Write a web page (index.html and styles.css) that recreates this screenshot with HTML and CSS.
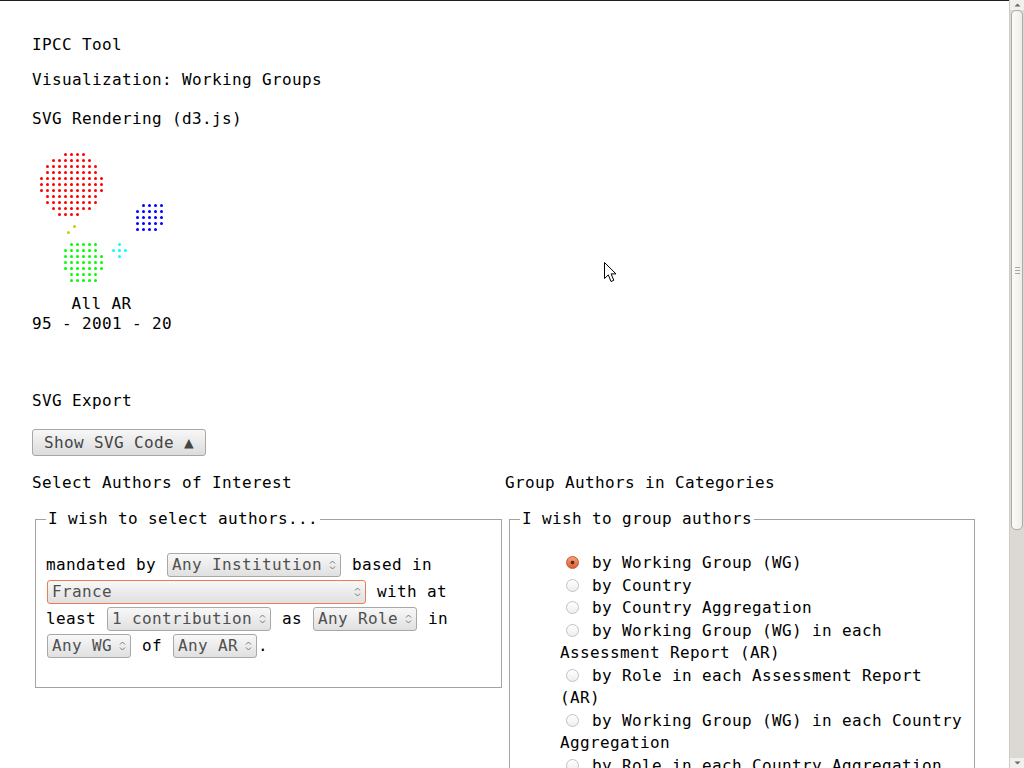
FILE: index.html
```html
<!DOCTYPE html>
<html lang="en">
<head>
<meta charset="utf-8">
<title>IPCC Tool</title>
<link rel="stylesheet" href="styles.css">
</head>
<body>
<div class="page">
  <div class="title">IPCC Tool</div>
  <div class="subtitle">Visualization: Working Groups</div>
  <div class="section">SVG Rendering (d3.js)</div>
  <svg class="viz" width="200" height="212" viewBox="0 0 200 212">
    <defs>
      <pattern id="pr" width="6" height="6" patternUnits="userSpaceOnUse" x="6" y="23"><circle cx="3.5" cy="3.5" r="1.5" fill="#ff0000"/></pattern>
      <pattern id="pg" width="6" height="6" patternUnits="userSpaceOnUse" x="6" y="23"><circle cx="3.5" cy="3.5" r="1.5" fill="#00ff00"/></pattern>
      <pattern id="pb" width="6" height="6" patternUnits="userSpaceOnUse" x="0" y="74"><circle cx="3.5" cy="3.5" r="1.5" fill="#0000ff"/></pattern>
    </defs>
    <g fill="url(#pr)">
      <rect x="30" y="23" width="24" height="6"/>
      <rect x="18" y="29" width="42" height="6"/>
      <rect x="12" y="35" width="54" height="12"/>
      <rect x="6" y="47" width="66" height="18"/>
      <rect x="12" y="65" width="54" height="12"/>
      <rect x="18" y="77" width="42" height="6"/>
      <rect x="24" y="83" width="24" height="6"/>
    </g>
    <g fill="url(#pg)">
      <rect x="36" y="113" width="30" height="6"/>
      <rect x="30" y="119" width="36" height="6"/>
      <rect x="30" y="125" width="42" height="18"/>
      <rect x="36" y="143" width="30" height="12"/>
    </g>
    <g fill="url(#pb)">
      <rect x="108" y="74" width="24" height="6"/>
      <rect x="102" y="80" width="30" height="18"/>
      <rect x="102" y="98" width="24" height="6"/>
    </g>
    <g fill="#cccc00">
      <circle cx="42.5" cy="98.5" r="1.5"/>
      <circle cx="36.5" cy="104.5" r="1.5"/>
    </g>
    <g fill="#00ffff">
      <circle cx="87.5" cy="116.5" r="1.5"/>
      <circle cx="81.5" cy="122.5" r="1.5"/>
      <circle cx="87.5" cy="122.5" r="1.5"/>
      <circle cx="93.5" cy="122.5" r="1.5"/>
      <circle cx="87.5" cy="128.5" r="1.5"/>
    </g>
    <text class="vt" x="39.5" y="181">All AR</text>
    <text class="vt" x="0" y="201">95 - 2001 - 20</text>
  </svg>
  <div class="section export">SVG Export</div>
  <button class="btn" type="button">Show SVG Code ▲</button>
  <div class="cols">
    <div class="col col-left">
      <div class="colhead">Select Authors of Interest</div>
      <fieldset class="box box-left">
        <legend>I wish to select authors...</legend>
        <p class="sentence">mandated by <span class="sel"><select><option>Any Institution</option></select><svg class="arr" width="7" height="12" viewBox="0 0 7 12"><path d="M1 4.5 L3.5 2 L6 4.5 M1 7.5 L3.5 10 L6 7.5" fill="none" stroke="#777" stroke-width="1"/></svg></span> based in <span class="sel"><select class="wide focus"><option>France</option></select><svg class="arr" width="7" height="12" viewBox="0 0 7 12"><path d="M1 4.5 L3.5 2 L6 4.5 M1 7.5 L3.5 10 L6 7.5" fill="none" stroke="#777" stroke-width="1"/></svg></span> with at least <span class="sel"><select><option>1 contribution</option></select><svg class="arr" width="7" height="12" viewBox="0 0 7 12"><path d="M1 4.5 L3.5 2 L6 4.5 M1 7.5 L3.5 10 L6 7.5" fill="none" stroke="#777" stroke-width="1"/></svg></span> as <span class="sel"><select><option>Any Role</option></select><svg class="arr" width="7" height="12" viewBox="0 0 7 12"><path d="M1 4.5 L3.5 2 L6 4.5 M1 7.5 L3.5 10 L6 7.5" fill="none" stroke="#777" stroke-width="1"/></svg></span> in <span class="sel"><select><option>Any WG</option></select><svg class="arr" width="7" height="12" viewBox="0 0 7 12"><path d="M1 4.5 L3.5 2 L6 4.5 M1 7.5 L3.5 10 L6 7.5" fill="none" stroke="#777" stroke-width="1"/></svg></span> of <span class="sel"><select><option>Any AR</option></select><svg class="arr" width="7" height="12" viewBox="0 0 7 12"><path d="M1 4.5 L3.5 2 L6 4.5 M1 7.5 L3.5 10 L6 7.5" fill="none" stroke="#777" stroke-width="1"/></svg></span>.</p>
      </fieldset>
    </div>
    <div class="col col-right">
      <div class="colhead colhead-right">Group Authors in Categories</div>
      <fieldset class="box box-right">
        <legend>I wish to group authors</legend>
        <ul class="opts">
          <li><label><input type="radio" name="grp" checked> by Working Group (WG)</label></li>
          <li><label><input type="radio" name="grp"> by Country</label></li>
          <li><label><input type="radio" name="grp"> by Country Aggregation</label></li>
          <li><label><input type="radio" name="grp"> by Working Group (WG) in each Assessment Report (AR)</label></li>
          <li><label><input type="radio" name="grp"> by Role in each Assessment Report (AR)</label></li>
          <li><label><input type="radio" name="grp"> by Working Group (WG) in each Country Aggregation</label></li>
          <li><label><input type="radio" name="grp"> by Role in each Country Aggregation</label></li>
        </ul>
      </fieldset>
    </div>
  </div>
</div>
<svg class="cursor" width="14" height="22" viewBox="0 0 14 22"><path d="M0.5 0.5 L0.5 16.5 L4.3 12.9 L7 19.5 L9.8 18.3 L7.1 11.9 L12 11.9 Z" fill="#fff" stroke="#000" stroke-width="1" stroke-linejoin="round"/></svg>
<div class="scrollbar" aria-hidden="true">
  <div class="sb-btn sb-up"><svg width="7" height="4" viewBox="0 0 7 4"><path d="M0.5 3.5 L3.5 0.5 L6.5 3.5 Z" fill="#6b6964"/></svg></div>
  <div class="sb-thumb"><span class="grip"></span><span class="grip"></span><span class="grip"></span></div>
  <div class="sb-track"></div>
  <div class="sb-btn sb-down"><svg width="7" height="4" viewBox="0 0 7 4"><path d="M0.5 0.5 L3.5 3.5 L6.5 0.5 Z" fill="#6b6964"/></svg></div>
</div>
</body>
</html>
```
FILE: styles.css
```css
html {
  border-top: 1px solid #1e1e1e;
  background: #fff;
  scrollbar-width: none;
}
body {
  margin: 0;
  font-family: "DejaVu Sans Mono", monospace;
  font-size: 16px;
  line-height: 20px;
  letter-spacing: 0.37px;
  color: #000;
}
.page {
  padding: 34px 32px 0;
  min-height: 1104px;
  box-sizing: border-box;
}
.subtitle { margin-top: 15px; }
.section { margin-top: 19px; }
.viz {
  display: block;
  margin-top: -1px;
  overflow: visible;
}
.vt {
  font-family: "DejaVu Sans Mono", monospace;
  font-size: 16px;
  letter-spacing: 0.37px;
  fill: #000;
}
.export { margin-top: 51px; }
.btn {
  display: block;
  margin-top: 18px;
  height: 27px;
  padding: 3px 11px;
  font: inherit;
  line-height: 19px;
  letter-spacing: inherit;
  color: #444;
  background: linear-gradient(#f7f7f7, #dcdcdc);
  border: 1px solid #a7a7a7;
  border-radius: 3px;
}
.cols {
  display: grid;
  grid-template-columns: 472px 473px;
  margin-top: 17px;
}
.colhead-right { padding-left: 1px; }
.box {
  border: 1px solid #a3a3a3;
  padding: 0 10px 10px;
  margin: 16px 2px 0;
  min-width: 0;
}
.box-left { margin-left: 3px; }
.box-right { margin-left: 5px; }
.box legend {
  padding: 0 2px;
  line-height: 20px;
}
.sentence {
  margin: 22px 0 18px;
  line-height: 27px;
}
.sel {
  position: relative;
  display: inline-block;
  vertical-align: top;
  margin: 1.5px 1px 0;
  line-height: 0;
}
.sel select {
  display: block;
  -webkit-appearance: none;
  appearance: none;
  height: 24px;
  margin: 0;
  padding: 0 17px 0 4px;
  font: inherit;
  font-size: 16px;
  line-height: 22px;
  letter-spacing: 0.37px;
  color: #505050;
  background: linear-gradient(#f8f8f8, #e0e0e0);
  border: 1px solid #a8a8a8;
  border-radius: 3px;
}
.sel select.wide { width: 319px; }
.sel select.focus { border-color: #ec7c54; }
.arr {
  position: absolute;
  right: 5px;
  top: 6px;
  pointer-events: none;
}
.opts {
  list-style: none;
  margin: 23px 0 0;
  padding: 0 0 0 40px;
  line-height: 22.5px;
}
.opts input[type=radio] {
  -webkit-appearance: none;
  appearance: none;
  box-sizing: border-box;
  width: 13px;
  height: 13px;
  margin: 4px 3px 0 6px;
  vertical-align: top;
  border: 1px solid #c2c2c2;
  border-radius: 50%;
  background: linear-gradient(#ffffff, #eeeeee);
}
.opts input[type=radio]:checked {
  border-color: #c9552c;
  background: radial-gradient(circle, #5a2a18 0, #5a2a18 1.4px, transparent 2.2px), linear-gradient(#f4a07a, #dc5e33);
}
.cursor {
  position: absolute;
  left: 604px;
  top: 262px;
  pointer-events: none;
}
.scrollbar {
  position: fixed;
  top: 0;
  right: 0;
  width: 15px;
  height: 100%;
  display: flex;
  flex-direction: column;
  background: #dcd9d5;
  border-left: 1px solid #cfccc7;
  box-sizing: border-box;
}
.sb-btn {
  height: 10px;
  flex: none;
  display: flex;
  align-items: center;
  justify-content: center;
  background: #f1f0ee;
}
.sb-thumb {
  height: 520px;
  flex: none;
  margin: 0 1px;
  display: flex;
  flex-direction: column;
  align-items: center;
  justify-content: center;
  gap: 2px;
  background: linear-gradient(to right, #fbfbfa, #efeeec);
  border: 1px solid #aeaaa4;
  border-radius: 5px;
  box-sizing: border-box;
}
.grip {
  width: 5px;
  height: 1px;
  background: #a9a6a0;
}
.sb-track { flex: 1; }
```
